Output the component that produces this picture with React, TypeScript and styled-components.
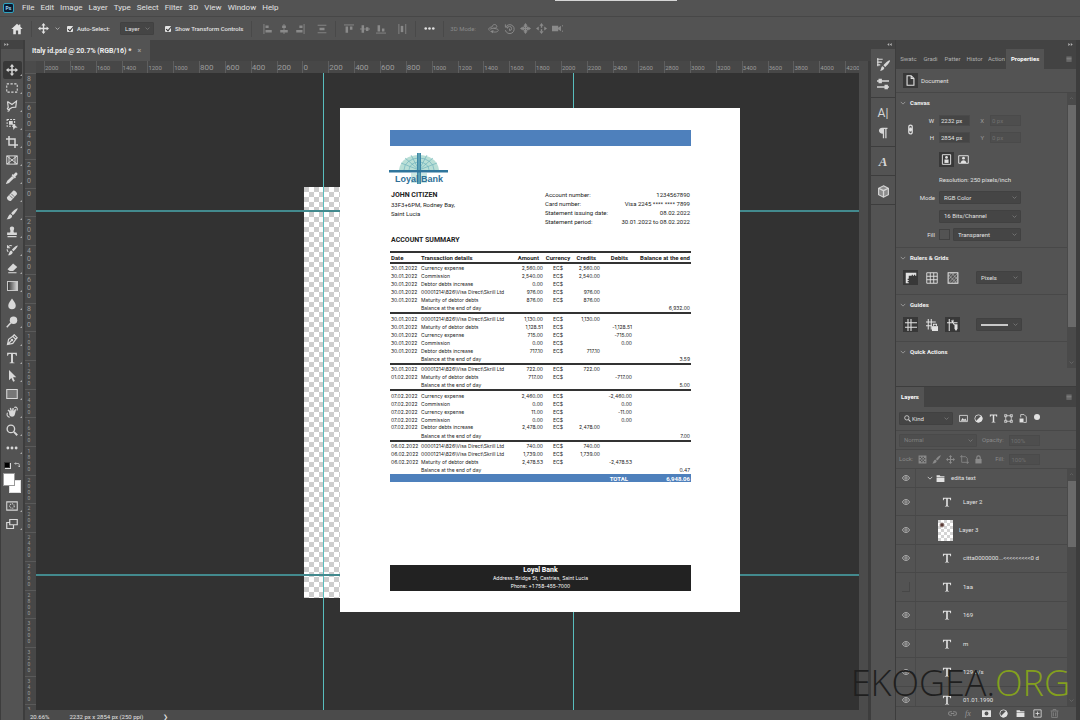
import React from "react";
import styled, { createGlobalStyle } from "styled-components";

const c = {
  panel: "#535353",
  strip: "#434343",
  edge: "#3d3d3d",
  field: "#454545",
  active: "#383838",
  canvas: "#323232",
  text: "#e2e2e2",
  dim: "#8a8a8a",
  blue: "#4e80bc",
  ink: "#222222",
};

const Global = createGlobalStyle`
  * { box-sizing: border-box; }
  html, body, #root { height: 100%; }
  body {
    margin: 0;
    background: ${c.panel};
    color: ${c.text};
    font: 6px/8px Roboto, "Liberation Sans", sans-serif;
    overflow: hidden;
  }
  button, input, select { font: inherit; color: inherit; }
  button { padding: 0; border: 0; background: none; display: grid; place-items: center; }
`;

/* ---------- shell ---------- */

const Shell = styled.div`
  position: relative;
  height: 100vh;
  display: flex;
  flex-direction: column;
`;
const MenuBar = styled.nav`
  position: relative;
  height: 17px;
  flex: none;
  display: flex;
  align-items: center;
  gap: 6px;
  padding-left: 3px;
  font-size: 8px;
  border-bottom: 1px solid #474747;
`;
const Brand = styled.span`
  width: 11px;
  height: 10px;
  margin-right: 2px;
  display: grid;
  place-items: center;
  border: 1px solid #2fa3c0;
  border-radius: 2px;
  background: #0a1c33;
  color: #9fd8f5;
  font: bold 5px/6px Roboto, sans-serif;
`;
const MenuItem = styled.button`
  line-height: 10px;
`;
const WindowEdge = styled.i`
  position: absolute;
  top: 0;
  left: 51.4%;
  width: 122px;
  height: 1px;
  background: #d6d6d6;
`;
const OptionsBar = styled.div`
  height: 23px;
  flex: none;
  display: flex;
  align-items: center;
  padding-left: 11px;
`;
const Cluster = styled.div<{ $gap?: number; $left?: number; $dim?: boolean }>`
  display: flex;
  align-items: center;
  gap: ${(p) => p.$gap ?? 5}px;
  margin-left: ${(p) => p.$left ?? 0}px;
  color: ${(p) => (p.$dim ? c.dim : c.text)};
`;
const Separator = styled.i`
  width: 1px;
  height: 16px;
  margin-left: 8px;
  background: #494949;
`;
const CheckLabel = styled.label`
  display: flex;
  align-items: center;
  gap: 4px;
  font-weight: 500;
`;
const CheckBox = styled.input`
  appearance: none;
  width: 6px;
  height: 6px;
  margin: 0;
  border-radius: 1px;
  background: #e4e4e4;
  position: relative;
  &::after {
    content: "";
    position: absolute;
    left: 2px;
    top: 0;
    width: 2px;
    height: 4px;
    border: solid #333;
    border-width: 0 1px 1px 0;
    transform: rotate(40deg);
  }
`;
const Body = styled.div`
  flex: 1;
  min-height: 0;
  display: flex;
`;

/* ---------- icons ---------- */

const Svg = styled.svg<{ $size: number }>`
  display: block;
  flex: none;
  width: ${(p) => p.$size}px;
  height: ${(p) => p.$size}px;
  fill: none;
  stroke: currentColor;
  stroke-width: 1.4;
  .f { fill: currentColor; stroke: none; }
`;
const art: Record<string, React.ReactNode> = {
  home: <path className="f" d="M8 1 0.500 8H3v7h3.500v-5h3v5H13V8h2.500L12.500 5V2h-2v1.200z" />,
  move: <path className="f" d="M8 0 5 3.500h2v3.500H3.500V5L0 8l3.500 3V9H7v3.500H5L8 16l3-3.500H9V9h3.500v2L16 8l-3.500-3v2H9V3.500h2z" />,
  marquee: <path strokeDasharray="3 2" d="M1 2.500h14v11H1z" />,
  lasso: <path strokeWidth="1.600" d="M2 2l6 4 6-4.500-1 8-5 .5-4 2.500M2 2l1 8c-2 1-1 3 .5 2.500S5 15 2 15" />,
  object: (<><path strokeDasharray="2.500 1.500" d="M1.500 2h10v9h-10z" /><path className="f" d="M4 4h5v5H4zM8.500 7l7 5.500-3.500.5-2 3z" /></>),
  crop: <path strokeWidth="2" d="M4 0v12h12M0 4h12v12" />,
  frame: <path d="M1 2.500h14v11H1zM1 2.500l14 11M15 2.500l-14 11M4 2.500v11M12 2.500v11" strokeWidth="1.300" />,
  dropper: (<><path className="f" d="M10 3.500 12 1.300c2-1.600 4.300.7 2.700 2.700L12.500 6l.8 1-1.500 1.500L7.500 4.200 9 2.700z" /><path strokeWidth="2" d="M9 6 2.500 12.300 1.500 14.500l2-.8L10.200 7.200" /></>),
  heal: (<><path className="f" d="M9.500 1c1.800-1.300 6 2.800 5.200 4.800L6.500 14.500c-1.900 1.400-6-2.300-5.200-4.800z" /><path stroke={c.panel} strokeWidth="1" d="M5 7.200l4 4M7 5l4 4" /></>),
  brush: <path className="f" d="M15.500.5c.8.8-4.500 8.500-6.300 9L7 7.400C7.600 5.500 14.500-.3 15.500.5zM6 8.200l2.200 2.200c.3 3-3.500 5.300-7.700 4.600C3 14 2.500 9 6 8.200z" />,
  stamp: <path className="f" d="M8 .8c2.200 0 3.400 1.800 2.700 3.600-.8 2-.7 3.100-.2 4.100h4V12h-13V8.500h4c.5-1 .6-2.100-.2-4.100C4.600 2.600 5.800.8 8 .8zM2 13.200h12V15H2z" />,
  history: (<><path className="f" d="M15.500 2c.8.8-4 7-5.800 7.500L8 7.800C8.600 6 14.500 1.200 15.500 2zM7 8.700l2 2C9 13 6 15.500 2.500 15 4.500 14 4 9.500 7 8.700z" /><path d="M2 1.500V5h3.500M2 5c1.500-3 4-3.500 6-2.500M1.500 7c0 1.500.3 2.500 1.500 3.500" /></>),
  eraser: (<><path className="f" d="M9.500 2 15 6.500 9.500 12H5L2 9.500z" /><path d="M3 14.300h11" /></>),
  drop: <path className="f" d="M8 .5c2 3.500 5 6 5 9.500a5 5 0 0 1-10 0C3 6.500 6 4 8 .5z" />,
  dodge: (<><circle className="f" cx="10" cy="5.500" r="5" /><path strokeWidth="2" d="M6.500 9 1 15" /></>),
  pen: (<><path strokeWidth="1.600" d="M2 14 3.500 7 9 3l4 4-4 5.500zM9 3l2-2 4 4-2 2M2 14l5-5" /><circle className="f" cx="8" cy="8" r="1.700" /></>),
  type: <path className="f" d="M1.500 1h13v4h-1.200c-.3-1.700-1-2.200-2.300-2.200H9.300V13c0 .9.500 1.200 2 1.200V15H4.700v-.8c1.500 0 2-.3 2-1.200V2.800H5C3.700 2.800 3 3.300 2.700 5H1.500z" />,
  arrow: <path className="f" d="M4 0v13.500l3.200-3 2.300 5.300 2.300-1-2.400-5.200h4.300z" />,
  rect: <path fill="#777" d="M1 2h14v12H1z" />,
  hand: (<><path className="f" d="M4 8 2 5.500l1.500-1L6 7 5 2.500l1.700-.3L8 6.500l.6-4 1.700.2L10.200 7l1.800-3 1.500.7-1.700 6.500C11 14.500 6.500 15.500 4.500 12z" /><path d="M11 2c3-1.500 5 1 3.500 4M2 9c-1.500 3 0 6 3 6" /></>),
  zoom: (<><circle cx="6.500" cy="6.500" r="5" strokeWidth="1.800" /><path strokeWidth="2.500" d="M10.500 10.500 15 15" /></>),
  dots: (<><circle className="f" cx="2.500" cy="8" r="1.900" /><circle className="f" cx="8" cy="8" r="1.900" /><circle className="f" cx="13.500" cy="8" r="1.900" /></>),
  mask: (<><path d="M1 2.500h14v11H1z" /><circle cx="8" cy="8" r="3" strokeDasharray="1.500 1" /></>),
  screen: <path strokeWidth="1.600" d="M5 2h10v7H5zM5 6H1v8h9V9" />,
  alignL: (<><path d="M1.500 0v16" /><path className="f" d="M4 2.500h5v4H4zM4 9.500h10v4H4z" /></>),
  alignC: (<><path d="M8 0v16" /><path className="f" d="M5 2.500h6v4H5zM2 9.500h12v4H2z" /></>),
  alignR: (<><path d="M14.500 0v16" /><path className="f" d="M7 2.500h5v4H7zM2 9.500h10v4H2z" /></>),
  spread: (<><path d="M1 2h14M1 14h14" /><path className="f" d="M4 6h8v4H4z" /></>),
  alignT: (<><path d="M0 1.500h16" /><path className="f" d="M2.500 4h4v10h-4zM9.500 4h4v5h-4z" /></>),
  alignM: (<><path d="M0 8h16" /><path className="f" d="M2.500 2h4v12h-4zM9.500 5h4v6h-4z" /></>),
  alignB: (<><path d="M0 14.500h16" /><path className="f" d="M2.500 2h4v10h-4zM9.500 7h4v5h-4z" /></>),
  spreadH: (<><path d="M3 0v16M14 0v16" /><path className="f" d="M6 3h4v10H6z" /></>),
  orbit: (<><path d="M2 11C-.5 8 3 5.500 6 6c0-4 5-5 6.500-2S10 8 8 7M3 9c3-2 12-1 12 1.500S10 14 6 12.500" /><path className="f" d="M8 10l-1 5-4-3z" /></>),
  roll: (<><path d="M2 2v4h4M2.500 6a6.500 6.500 0 1 1-.5 4.500" /><path d="M5 8a3 3 0 1 1 3 3V8" /></>),
  pan: (<><path className="f" d="M8 0 5 4h6zM8 16l3-4H5zM0 8l4 3V5zM16 8l-4-3v6z" /><path strokeWidth="2" d="M8 3v10M3 8h10" /><circle cx="8" cy="8" r="3.500" /></>),
  slide: (<><path className="f" d="M8 0 5 4h2v3h2V4h2zM8 16l3-4H5zM0 8l4 3V5zM16 8l-4-3v6z" /><path className="f" d="M7 9h2v3H7z" /></>),
  camera: <path className="f" d="M0 4h9v8H0zM9 7l4-3v8l-4-3zM15 3h1v2h-1zM15 11h1v2h-1z" />,
  brushes: (<><path className="f" d="M16 3c.8.800-4.300 7.500-6 8L8 9.200C8.600 7.500 15 2.200 16 3zM7 10l2 2c0 2.500-3 4-5.500 3.500 2-1 1-4.700 3.500-5.500z" /><path d="M0 1.500h7M0 5h6M0 8.500h4M1 0v10" /></>),
  sliders: (<><path strokeWidth="1.800" d="M0 4h16M0 12h16" /><path className="f" d="M2 1h4.500v6H2zM10 9h4.500v6H10z" /></>),
  para: <path className="f" d="M7 1h7v1.800h-1.300V15H11V2.800H9.500V15H7.800V9C1 9 1 1 7 1z" />,
  cube: (<><path fill="#8c8c8c" d="M8 1l6 3v8l-6 3-6-3V4z" /><path strokeWidth="1.600" d="M2 4l6 3 6-3M8 7v8" /></>),
  doc: <path strokeWidth="1.600" d="M3 1h6l4 4v10H3zM9 1v4h4" />,
  link: <path strokeWidth="1.800" d="M5.500 7V4a2.500 2.500 0 0 1 5 0v3zM5.500 9v3a2.500 2.500 0 0 0 5 0V9zM8 5v6" />,
  portrait: (<><path d="M2 1h12v14H2z" /><circle className="f" cx="8" cy="5" r="2" /><path className="f" d="M5 8h6v5H5z" /></>),
  landscape: (<><path d="M1 2.500h14v11H1z" /><circle className="f" cx="8" cy="6" r="2" /><path className="f" d="M4 13c0-5 8-5 8 0z" /></>),
  ruler: <path className="f" d="M1 1h14v4h-1.500V3.500H12V5h-1.500V3.500H9V5H5v4H3.500v1.500H5V12H3.500v1.500H5V15H1z" />,
  grid: <path strokeWidth="1.200" d="M1 1h14v14H1zM1 5.700h14M1 10.300h14M5.700 1v14M10.300 1v14" />,
  check: (<><path d="M1.500 1h13v14h-13z" /><path strokeWidth="1" d="M2 6l4-5M2 10 10 1M2 15 14 2M6 15l8-9M10 15l4-5M2 4l11 11M6 1l8 9" opacity=".6" /></>),
  guides: <path d="M4 0v16M8 0v16M0 5h16M0 11h16" />,
  guideLock: (<><path d="M3 0v14M7 0v14M0 4h13M0 9h8" /><path className="f" d="M8 9.500h8V16H8z" /><path d="M10 9V7h4v2" /></>),
  guideSmart: (<><path d="M3 0v16M0 5h14M6 2l4 6M8 1v3" /><path className="f" d="M10 7h4v6l-2 3-2-3z" /></>),
  image: (<><path d="M1 2.500h14v11H1z" /><path className="f" d="M3 12l3.500-5L9 10l2-2 3 4z" /></>),
  half: (<><circle cx="8" cy="8" r="6.500" /><path className="f" d="M12.800 3.200A6.800 6.800 0 1 1 3.200 12.800z" /></>),
  shape: <path d="M3 3h10v10H3zM1 1h4v4H1zM11 1h4v4h-4zM1 11h4v4H1zM11 11h4v4h-4z" strokeWidth="1.200" />,
  smart: (<><path d="M3 6V1h6l4 4v10H8" /><path className="f" d="M1 8h7v7H1z" /></>),
  checker: <path className="f" d="M1 1h14v14H1zM3 3v2.500h2.500V3zM8 3v2.500h2.500V3zM5.500 5.500V8H8V5.500zM10.500 5.500V8H13V5.500zM3 8v2.500h2.500V8zM8 8v2.500h2.500V8zM5.500 10.500V13H8v-2.500zM10.500 10.500V13H13v-2.500z" fillRule="evenodd" />,
  artboard: <path d="M3 0v13M0 3h10l3 3v10M3 13h13" />,
  lock: (<><path className="f" d="M2.500 7h11v8h-11z" /><path strokeWidth="2" d="M5 7V4.500a3 3 0 0 1 6 0V7" /></>),
  eye: (<><path strokeWidth="1.600" d="M1 8c2.500-6.500 11.500-6.500 14 0-2.500 6.500-11.500 6.500-14 0z" /><circle cx="8" cy="8" r="2.400" /></>),
  folder: (<><path className="f" d="M1 2h5.500L8 4h7v2H1zM1 7h14v7H1z" /></>),
  chain: <path strokeWidth="1.800" d="M7 11H4a3 3 0 0 1 0-6h3M9 5h3a3 3 0 0 1 0 6H9M5 8h6" />,
  maskAdd: (<><path className="f" fillRule="evenodd" d="M0 2h16v12H0zM8 4.500a3.500 3.500 0 1 0 0 7 3.500 3.500 0 0 0 0-7z" /></>),
  add: <path d="M1.500 1.500h13v13h-13zM8 4.500v7M4.500 8h7" />,
  trash: <path d="M1 3.500h14M5.500 3V1h5v2M3 4v11h10V4M6 6v7M10 6v7" />,
  chevron: <path d="M2 5l6 6 6-6" strokeWidth="2" />,
  up: <path d="M3 10l5-5 5 5" strokeWidth="1.600" />,
  burger: <path d="M1 3h14M1 6.500h14M1 10h14M1 13.500h14" />,
  back: <path className="f" d="M7 3v10L1 8zM15 3v10L9 8z" />,
  fwd: <path className="f" d="M1 3v10l6-5zM9 3v10l6-5z" />,
  swap: <path d="M2 4h9a3 3 0 0 1 3 3v6M5 1 2 4l3 3M11 10l3 3 2-3" strokeWidth="1.800" />,
};
const Icon = ({ n, s = 11 }: { n: string; s?: number }) => (
  <Svg $size={s} viewBox="0 0 16 16" aria-hidden="true">{art[n]}</Svg>
);

/* ---------- form parts ---------- */

const SelectBox = styled.span<{ $w?: number; $dim?: boolean }>`
  position: relative;
  display: flex;
  align-items: center;
  width: ${(p) => (p.$w ? p.$w + "px" : "auto")};
  height: 13px;
  background: ${(p) => (p.$dim ? "#4e4e4e" : c.field)};
  border: 1px solid ${(p) => (p.$dim ? "#4a4a4a" : "#414141")};
  border-radius: 1px;
  color: ${(p) => (p.$dim ? "#808080" : c.text)};
  select {
    appearance: none;
    width: 100%;
    height: 100%;
    padding: 0 10px 0 4px;
    border: 0;
    background: none;
  }
  select:disabled { opacity: 1; }
  svg { position: absolute; right: 3px; color: #8e8e8e; pointer-events: none; }
`;
const Select = ({ label, value, w, dim }: { label: string; value: string; w?: number; dim?: boolean }) => (
  <SelectBox $w={w} $dim={dim}>
    <select aria-label={label} disabled={dim} defaultValue={value}><option>{value}</option></select>
    <Icon n="chevron" s={5} />
  </SelectBox>
);
const Field = styled.input<{ $w?: number }>`
  width: ${(p) => p.$w ?? 31}px;
  height: 11px;
  padding: 0 1px;
  border: 1px solid #4a4a4a;
  background: ${c.field};
  &:disabled { background: #4e4e4e; color: #707070; }
`;

/* ---------- tools ---------- */

const ToolColumn = styled.aside`
  width: 25px;
  flex: none;
  display: flex;
  flex-direction: column;
  align-items: center;
  border: solid ${c.edge};
  border-width: 0 2px 0 1px;
`;
const ColumnCap = styled.div<{ $end?: boolean }>`
  width: 100%;
  height: 9px;
  flex: none;
  display: flex;
  align-items: center;
  justify-content: ${(p) => (p.$end ? "flex-end" : "flex-start")};
  padding: 0 3px;
  background: ${c.strip};
  color: #b5b5b5;
`;
const ToolList = styled.div`
  padding-top: 12px;
`;
const ToolButton = styled.button<{ $on?: boolean }>`
  position: relative;
  width: 19px;
  height: 18px;
  border-radius: 2px;
  color: #d8d8d8;
  background: ${(p) => (p.$on ? c.active : "none")};
  &::after {
    content: "";
    position: absolute;
    right: 0;
    bottom: 3px;
    border: 1px solid transparent;
    border-right-color: #aaa;
    border-bottom-color: #aaa;
  }
`;
const GradientChip = styled.i`
  width: 11px;
  height: 10px;
  border: 1px solid #c8c8c8;
  background: linear-gradient(90deg, #3a3a3a, #d0d0d0);
`;
const MiniRow = styled.div`
  height: 16px;
  display: flex;
  align-items: center;
  justify-content: space-around;
`;
const MiniSwatch = styled.i`
  width: 6px;
  height: 6px;
  background: #000;
  border: 1px solid #333;
  box-shadow: 1px 1px 0 #ddd;
`;
const Colours = styled.div`
  position: relative;
  height: 24px;
`;
const Colour = styled.button<{ $back?: boolean }>`
  position: absolute;
  left: ${(p) => (p.$back ? 6 : 0)}px;
  top: ${(p) => (p.$back ? 7 : 0)}px;
  width: 12px;
  height: 13px;
  background: #fff;
  border: 1px solid ${(p) => (p.$back ? "#ddd" : "#999")};
`;

/* ---------- document ---------- */

const DocColumn = styled.main`
  flex: 1;
  min-width: 0;
  display: flex;
  flex-direction: column;
`;
const TabStrip = styled.div`
  height: 21px;
  flex: none;
  display: flex;
  background: ${c.strip};
`;
const DocTab = styled.div`
  width: 125px;
  display: flex;
  align-items: center;
  gap: 6px;
  padding-left: 7px;
  background: ${c.panel};
  color: #eee;
  font-size: 7px;
  font-weight: bold;
  white-space: nowrap;
  button { color: #999; }
`;
const DocGrid = styled.div`
  flex: 1;
  min-height: 0;
  display: grid;
  grid-template: 12px 1fr 10px / 11px 1fr 12px;
`;
const Corner = styled.div`
  background: #4b4b4b;
`;
const RulerTop = styled.div`
  overflow: hidden;
  padding-left: 8px;
  background: #474747;
  color: #9c9c9c;
`;
const TopTicks = styled.div`
  width: calc(100% + 12px);
  height: 100%;
  display: grid;
  grid-template-columns: repeat(32, 1fr);
`;
const TopTick = styled.span<{ $small: boolean }>`
  min-width: 0;
  border-left: 1px solid #5e5e5e;
  font-size: ${(p) => (p.$small ? 6 : 8)}px;
  line-height: 14px;
`;
const RulerSide = styled.div`
  overflow: hidden;
  background: #474747;
  color: #9c9c9c;
`;
const SideTicks = styled.div`
  height: calc(100% + 23px);
  display: grid;
  grid-template-rows: repeat(23, 1fr);
`;
const SideTick = styled.span<{ $small: boolean }>`
  min-height: 0;
  padding-top: 1px;
  border-top: 1px solid #5a5a5a;
  writing-mode: vertical-lr;
  text-orientation: upright;
  font-size: ${(p) => (p.$small ? 5 : 7)}px;
  line-height: 7px;
`;
const Scroller = styled.div`
  grid-row: 1 / 4;
  grid-column: 3;
  background: #4b4b4b;
  border-right: 3px solid ${c.edge};
`;
const Stage = styled.div`
  position: relative;
  overflow: hidden;
  background: ${c.canvas};
`;
const Artboard = styled.div`
  position: absolute;
  left: 268px;
  top: 114px;
  width: 321px;
  height: 411px;
  background: conic-gradient(#fff 25%, #cdcdcd 0 50%, #fff 0 75%, #cdcdcd 0) 0 0 / 10px 10px;
`;
const Guide = styled.i<{ $x?: number; $y?: number }>`
  position: absolute;
  left: ${(p) => p.$x ?? 0}px;
  top: ${(p) => p.$y ?? 0}px;
  width: ${(p) => (p.$x ? "1px" : "100%")};
  height: ${(p) => (p.$y ? "2px" : "100%")};
  background: ${(p) => (p.$y ? "#438a8e" : "#58bdbd")};
`;
const StatusBar = styled.footer`
  grid-column: 1 / 3;
  display: flex;
  align-items: center;
  gap: 20px;
  padding: 4px 0 0 5px;
  background: #4b4b4b;
`;

/* ---------- statement ---------- */

const Overlay = styled.div`
  position: absolute;
  inset: 0;
  display: grid;
  place-items: center;
  pointer-events: none;
`;
const Sheet = styled.article`
  width: 400px;
  height: 504px;
  padding: 22px 49px 21px 50px;
  display: flex;
  flex-direction: column;
  background: #fff;
  color: ${c.ink};
  line-height: 9px;
`;
const Band = styled.div`
  height: 16px;
  flex: none;
  background: ${c.blue};
`;
const Logo = styled.svg`
  display: block;
  flex: none;
  width: 60px;
  height: 33px;
  margin: 6px 0 5px -1px;
`;
const Parties = styled.div`
  display: flex;
  justify-content: space-between;
  padding: 0 1px;
`;
const Strong = styled.h2`
  margin: 0;
  font-size: 7px;
  line-height: 10px;
`;
const Lines = styled.p`
  margin: 0;
  white-space: pre-line;
`;
const Facts = styled.dl`
  width: 145px;
  margin: 0;
  display: grid;
  grid-template-columns: auto auto;
  dt, dd { margin: 0; white-space: nowrap; }
  dd { text-align: right; }
`;
const Summary = styled(Strong)`
  margin: 9px 0 6px 1px;
`;
const Ledger = styled.table`
  width: 100%;
  height: 231px;
  flex: none;
  table-layout: fixed;
  border-collapse: collapse;
  font: 5px/6px Inter, Roboto, sans-serif;
  thead { border-top: 2px solid #333; }
  tbody { border-top: 2px solid #333; }
  thead tr { height: 11px; }
  tfoot tr { height: 8px; }
  th, td { padding: 0; white-space: nowrap; text-align: right; }
  th { font: bold 6px/8px Roboto, sans-serif; }
  .l { text-align: left; }
  .m { text-align: center; }
  td:first-child, th:first-child { padding-left: 1px; }
  td:last-child, th:last-child { padding-right: 1px; }
  .in { padding-right: 4px; }
  tfoot td { background: ${c.blue}; color: #fff; font: bold 6px/7px Roboto, sans-serif; }
`;
const Imprint = styled.footer`
  margin-top: auto;
  padding: 1px 0;
  background: #222;
  color: #fff;
  text-align: center;
  font: 5px/8px Inter, Roboto, sans-serif;
  strong { display: block; font: bold 7px/8px Roboto, sans-serif; }
`;

type Row = [string, string, string?, string?, string?, string?];
const visa = "00001214\\826\\Visa Direct\\Skrill Ltd";
const end = "Balance at the end of day";
const groups: Row[][] = [
  [
    ["30.01.2022", "Currency expense", "2,560.00", "2,560.00"],
    ["30.01.2022", "Commission", "2,540.00", "2,540.00"],
    ["30.01.2022", "Debtor debts increase", "0.00"],
    ["30.01.2022", visa, "976.00", "976.00"],
    ["30.01.2022", "Maturity of debtor debts", "876.00", "876.00"],
    ["", end, "", "", "", "6,932.00"],
  ],
  [
    ["30.01.2022", visa, "1,130.00", "1,130.00"],
    ["30.01.2022", "Maturity of debtor debts", "1,128.51", "", "-1,128.51"],
    ["30.01.2022", "Currency expense", "715.00", "", "-715.00"],
    ["30.01.2022", "Commission", "0.00", "", "0.00"],
    ["30.01.2022", "Debtor debts increase", "717.10", "717.10"],
    ["", end, "", "", "", "3.59"],
  ],
  [
    ["30.01.2022", visa, "722.00", "722.00"],
    ["01.02.2022", "Maturity of debtor debts", "717.00", "", "-717.00"],
    ["", end, "", "", "", "5.00"],
  ],
  [
    ["07.02.2022", "Currency expense", "2,460.00", "", "-2,460.00"],
    ["07.02.2022", "Commission", "0.00", "", "0.00"],
    ["07.02.2022", "Currency expense", "11.00", "", "-11.00"],
    ["07.02.2022", "Commission", "0.00", "", "0.00"],
    ["07.02.2022", "Debtor debts increase", "2,478.00", "2,478.00"],
    ["", end, "", "", "", "7.00"],
  ],
  [
    ["06.02.2022", visa, "740.00", "740.00"],
    ["06.02.2022", visa, "1,739.00", "1,739.00"],
    ["06.02.2022", "Maturity of debtor debts", "2,478.53", "", "-2,478.53"],
    ["", end, "", "", "", "0.47"],
  ],
];
const facts = [
  ["Account number:", "1234567890"],
  ["Card number:", "Visa 2245 **** **** 7899"],
  ["Statement issuing date:", "08.02.2022"],
  ["Statement period:", "30.01.2022 to 08.02.2022"],
];

const BankLogo = () => (
  <Logo viewBox="0 0 60 33" role="img" aria-label="Loyal Bank">
    <path d="M10 18C11 8 20 3 30 3s19 5 20 15z" fill="#b9dfd6" />
    <g stroke="#5fa9b8" strokeWidth=".7" fill="none" opacity=".8">
      <path d="M30 18 12 11M30 18 16 6M30 18 22 3M30 18 38 3M30 18 44 6M30 18 48 11M15 18a15 12 0 0 1 30 0M20 18a10 8 0 0 1 20 0" />
    </g>
    <path d="M22 21h16v10H22z" fill="#a8d8d0" opacity=".6" />
    <path d="M28 1h4v31h-4z" fill="#3f88a6" />
    <path d="M29.500 1h1v31h-1z" fill="#79b8c4" />
    <path d="M0 18h59v2.500H0z" fill="#2f759c" />
    <text x="6" y="30" fontFamily="Liberation Sans, sans-serif" fontWeight="bold" fontSize="9" fill="#2f6f98">Loyal Bank</text>
  </Logo>
);

const Statement = () => (
  <Sheet>
    <Band />
    <BankLogo />
    <Parties>
      <div>
        <Strong>JOHN CITIZEN</Strong>
        <Lines>{"33F3+6PM, Rodney Bay,\nSaint Lucia"}</Lines>
      </div>
      <Facts>
        {facts.map(([k, v]) => (
          <React.Fragment key={k}><dt>{k}</dt><dd>{v}</dd></React.Fragment>
        ))}
      </Facts>
    </Parties>
    <Summary>ACCOUNT SUMMARY</Summary>
    <Ledger>
      <colgroup>
        {[31, 90, 32, 30, 27, 32, 59].map((w, i) => <col key={i} width={w} />)}
      </colgroup>
      <thead>
        <tr>
          <th className="l">Date</th>
          <th className="l">Transaction details</th>
          <th className="in">Amount</th>
          <th className="m">Currency</th>
          <th className="in">Credits</th>
          <th className="in">Debits</th>
          <th>Balance at the end</th>
        </tr>
      </thead>
      {groups.map((rows, g) => (
        <tbody key={g}>
          {rows.map(([date, what, amount, credit, debit, balance], i) => (
            <tr key={i}>
              <td className="l">{date}</td>
              <td className="l">{what}</td>
              <td>{amount}</td>
              <td className="m">{amount ? "EC$" : ""}</td>
              <td>{credit}</td>
              <td>{debit}</td>
              <td>{balance}</td>
            </tr>
          ))}
        </tbody>
      ))}
      <tfoot>
        <tr><td colSpan={5} /><td className="in">TOTAL</td><td>6,948.06</td></tr>
      </tfoot>
    </Ledger>
    <Imprint>
      <strong>Loyal Bank</strong>
      <div>Address: Bridge St, Castries, Saint Lucia</div>
      <div>Phone: +1 758-455-7000</div>
    </Imprint>
  </Sheet>
);

/* ---------- panels ---------- */

const IconDock = styled.aside`
  width: 24px;
  flex: none;
  display: flex;
  flex-direction: column;
  color: #d6d6d6;
`;
const DockGroup = styled.div`
  display: grid;
  justify-items: center;
  border-bottom: 1px solid ${c.edge};
  padding: 5px 0 3px;
  button { height: 20px; }
`;
const Letter = styled.span<{ $serif?: boolean }>`
  font: ${(p) => (p.$serif ? 'italic bold 13px/14px "Liberation Serif", serif' : '12px/14px Roboto, sans-serif')};
`;
const Panels = styled.aside`
  width: 185px;
  flex: none;
  display: flex;
  flex-direction: column;
  border: solid ${c.edge};
  border-width: 0 4px 0 1px;
`;
const PanelTabs = styled.div`
  height: 20px;
  flex: none;
  display: flex;
  align-items: stretch;
  background: ${c.strip};
  > svg { margin: 7px 4px 0 auto; color: #b5b5b5; }
`;
const PanelTab = styled.button<{ $on?: boolean }>`
  width: ${(p) => (p.$on ? "auto" : "22px")};
  padding: 0 5px;
  display: block;
  overflow: hidden;
  text-align: left;
  white-space: nowrap;
  background: ${(p) => (p.$on ? c.panel : "none")};
  color: ${(p) => (p.$on ? "#fff" : "#b0b0b0")};
  font-weight: ${(p) => (p.$on ? "bold" : "normal")};
`;
const TabClip = styled.span`
  display: block;
  overflow: hidden;
  margin-right: -3px;
`;
const Properties = styled.section`
  height: 318px;
  flex: none;
  border-bottom: 1px solid ${c.edge};
`;
const TitleRow = styled.div`
  height: 24px;
  display: flex;
  align-items: center;
  gap: 3px;
  padding-left: 7px;
  border-bottom: 1px solid #474747;
`;
const Scrolled = styled.div`
  display: flex;
`;
const Scroll = styled.div`
  flex: 1;
  min-width: 0;
`;
const Track = styled.div<{ $h?: number }>`
  width: 9px;
  height: ${(p) => (p.$h ? p.$h + "px" : "auto")};
  flex: none;
  display: flex;
  flex-direction: column;
  align-items: center;
  padding: 3px 0;
  background: #4a4a4a;
  color: #777;
`;
const Thumb = styled.i<{ $h: number }>`
  width: 8px;
  height: ${(p) => p.$h}px;
  margin: 4px 0 auto;
  background: #6a6a6a;
`;
const Section = styled.section<{ $h?: number }>`
  height: ${(p) => (p.$h ? p.$h + "px" : "auto")};
  padding-left: 4px;
  border-bottom: ${(p) => (p.$h ? "1px solid #484848" : "0")};
`;
const SectionHead = styled.h3`
  height: 19px;
  margin: 0;
  display: flex;
  align-items: center;
  gap: 4px;
  font-size: 6px;
  color: #f2f2f2;
  svg { color: #aaa; }
`;
const SizeGrid = styled.div`
  display: grid;
  grid-template-columns: 27px 12px 31px 20px 31px;
  grid-auto-rows: 17px;
  align-items: center;
  label { text-align: right; padding-right: 5px; }
  label.off { color: #999; padding-right: 6px; }
`;
const LinkCell = styled.span`
  grid-row: 1 / 3;
  display: grid;
  place-items: center;
  height: 100%;
  padding-right: 7px;
`;
const Indent = styled.div<{ $h: number }>`
  height: ${(p) => p.$h}px;
  display: flex;
  align-items: center;
  gap: 2px;
  padding-left: 39px;
`;
const RowLabel = styled.span`
  width: 19px;
  margin-left: -23px;
  margin-right: 2px;
  text-align: right;
`;
const Toggle = styled.button<{ $on?: boolean }>`
  width: 15px;
  height: 15px;
  background: ${(p) => (p.$on ? c.active : "none")};
`;
const Chip = styled.i`
  width: 11px;
  height: 11px;
  margin-right: 1px;
  border: 1px solid #414141;
`;
const ToggleRow = styled.div`
  display: flex;
  align-items: center;
  gap: 6px;
  padding: 3px 0 0 3px;
  > span { margin-left: 10px; }
`;
const LineSelect = styled(SelectBox)`
  &::before { content: ""; width: 27px; height: 2px; margin-left: 4px; background: #c8c8c8; }
  select { position: absolute; inset: 0; color: transparent; }
`;
const Layers = styled.section`
  flex: 1;
  min-height: 0;
  display: flex;
  flex-direction: column;
`;
const FilterRow = styled.div<{ $h: number; $gap?: number; $dim?: boolean }>`
  height: ${(p) => p.$h}px;
  flex: none;
  display: flex;
  align-items: center;
  gap: ${(p) => p.$gap ?? 5}px;
  padding-left: 3px;
  border-bottom: 1px solid #484848;
  color: ${(p) => (p.$dim ? "#8a8a8a" : c.text)};
`;
const KindBox = styled(SelectBox)`
  > svg:first-child { position: static; margin-left: 4px; color: #ddd; }
  select { padding-left: 1px; }
`;
const Dot = styled.i`
  width: 6px;
  height: 6px;
  margin: 0 0 4px;
  border-radius: 50%;
  background: #e0e0e0;
`;
const ListArea = styled.div`
  flex: 1;
  min-height: 0;
  display: flex;
  overflow: hidden;
`;
const LayerList = styled.ul`
  flex: 1;
  height: calc(100% + 9px);
  margin: 0;
  padding: 0;
  list-style: none;
  display: grid;
  grid-template-rows: 19px repeat(8, 1fr);
`;
const LayerRow = styled.li`
  display: flex;
  align-items: stretch;
  border-bottom: 1px solid #484848;
`;
const EyeCell = styled.button`
  width: 20px;
  border-right: 1px solid #4a4a4a;
  color: #c4c4c4;
`;
const EmptyEye = styled.i`
  width: 8px;
  height: 10px;
  border: solid #474747;
  border-width: 0 1px 1px 0;
`;
const LayerBody = styled.div<{ $left: number; $gap: number }>`
  display: flex;
  align-items: center;
  gap: ${(p) => p.$gap}px;
  padding-left: ${(p) => p.$left}px;
`;
const Thumbnail = styled.i`
  width: 15px;
  height: 21px;
  background:
    radial-gradient(circle at 4px 5px, #5a3a34 1px, transparent 3px),
    conic-gradient(#fff 25%, #d4d4d4 0 50%, #fff 0 75%, #d4d4d4 0) 0 0 / 6px 6px;
`;
const LayerActions = styled.div`
  height: 14px;
  flex: none;
  display: flex;
  align-items: center;
  gap: 8px;
  padding-left: 52px;
  border-top: 1px solid #484848;
`;
const Fx = styled.span`
  width: 9px;
  font: italic 8px/9px "Liberation Serif", serif;
  color: #999;
`;
const Watermark = styled.div`
  position: absolute;
  right: 10px;
  bottom: 15px;
  font: 300 36px/44px "Open Sans", sans-serif;
  color: #1f1f1f;
  span { color: #84a01d; }
`;

const tools = ["move", "marquee", "lasso", "object", "crop", "frame", "dropper", "heal", "brush", "stamp", "history", "eraser", "gradient", "drop", "dodge", "pen", "type", "arrow", "rect", "hand", "zoom", "dots"];
const layers = ["Layer 2", "Layer 3", "citta0000000...<<<<<<<<<0 d", "1aa", "169", "m", "129 b/s", "01.01.1990"];
const menus = ["File", "Edit", "Image", "Layer", "Type", "Select", "Filter", "3D", "View", "Window", "Help"];
const xMarks = Array.from({ length: 32 }, (_, i) => Math.abs(i - 10) * 200);
const yMarks = Array.from({ length: 23 }, (_, i) => Math.abs(i - 4) * 200);

export default function App() {
  return (
    <>
      <Global />
      <Shell>
        <MenuBar>
          <Brand>Ps</Brand>
          {menus.map((m) => <MenuItem key={m}>{m}</MenuItem>)}
          <WindowEdge />
        </MenuBar>
        <OptionsBar>
          <Icon n="home" s={12} />
          <Separator />
          <Cluster $left={6} $gap={6}><Icon n="move" /><Icon n="chevron" s={5} /></Cluster>
          <Cluster $left={7} $gap={10}>
            <CheckLabel><CheckBox type="checkbox" defaultChecked />Auto-Select:</CheckLabel>
            <Select label="Auto-select target" value="Layer" w={34} />
          </Cluster>
          <Cluster $left={11}>
            <CheckLabel><CheckBox type="checkbox" defaultChecked />Show Transform Controls</CheckLabel>
          </Cluster>
          <Separator />
          <Cluster $left={11} $gap={6} $dim><Icon n="alignL" s={10} /><Icon n="alignC" s={10} /><Icon n="alignR" s={10} /></Cluster>
          <Cluster $left={12} $dim><Icon n="spread" s={10} /></Cluster>
          <Separator />
          <Cluster $left={8} $gap={6} $dim><Icon n="alignT" s={10} /><Icon n="alignM" s={10} /><Icon n="alignB" s={10} /></Cluster>
          <Cluster $left={11} $dim><Icon n="spreadH" s={10} /></Cluster>
          <Separator />
          <Cluster $left={8}><Icon n="dots" /></Cluster>
          <Separator />
          <Cluster $left={6} $gap={12} $dim>
            <span>3D Mode:</span>
            <Cluster $gap={5} $dim><Icon n="orbit" /><Icon n="roll" /><Icon n="pan" /><Icon n="slide" /><Icon n="camera" /></Cluster>
          </Cluster>
        </OptionsBar>

        <Body>
          <ToolColumn>
            <ColumnCap><Icon n="fwd" s={5} /></ColumnCap>
            <ToolList>
              {tools.map((t, i) => (
                <ToolButton key={t} $on={i === 0} aria-label={t}>
                  {t === "gradient" ? <GradientChip /> : <Icon n={t} s={12} />}
                </ToolButton>
              ))}
              <MiniRow><MiniSwatch /><Icon n="swap" s={6} /></MiniRow>
              <Colours>
                <Colour $back aria-label="Background colour" />
                <Colour aria-label="Foreground colour" />
              </Colours>
              <ToolButton aria-label="Quick mask"><Icon n="mask" s={12} /></ToolButton>
              <ToolButton aria-label="Screen mode"><Icon n="screen" s={12} /></ToolButton>
            </ToolList>
          </ToolColumn>

          <DocColumn>
            <TabStrip>
              <DocTab>Italy id.psd @ 20.7% (RGB/16) *<button aria-label="Close">×</button></DocTab>
            </TabStrip>
            <DocGrid>
              <Corner />
              <RulerTop>
                <TopTicks>
                  {xMarks.map((v, i) => <TopTick key={i} $small={v > 999}>{v}</TopTick>)}
                </TopTicks>
              </RulerTop>
              <Scroller />
              <RulerSide>
                <SideTicks>
                  {yMarks.map((v, i) => <SideTick key={i} $small={v > 999}>{v}</SideTick>)}
                </SideTicks>
              </RulerSide>
              <Stage>
                <Artboard />
                <Guide $x={287} />
                <Guide $x={537} />
                <Guide $y={137} />
                <Guide $y={501} />
              </Stage>
              <StatusBar>
                <span>20.66%</span>
                <span>2232 px x 2854 px (250 ppi)</span>
                <span>❯</span>
              </StatusBar>
            </DocGrid>
          </DocColumn>

          <IconDock>
            <ColumnCap $end><Icon n="back" s={5} /></ColumnCap>
            <DockGroup>
              <button aria-label="Brush settings"><Icon n="brushes" s={13} /></button>
              <button aria-label="Brushes"><Icon n="sliders" s={12} /></button>
            </DockGroup>
            <DockGroup>
              <button aria-label="Character"><Letter>A|</Letter></button>
              <button aria-label="Paragraph"><Icon n="para" s={12} /></button>
            </DockGroup>
            <DockGroup><button aria-label="Glyphs"><Letter $serif>A</Letter></button></DockGroup>
            <DockGroup><button aria-label="3D"><Icon n="cube" s={13} /></button></DockGroup>
          </IconDock>

          <Panels>
            <ColumnCap $end><Icon n="fwd" s={5} /></ColumnCap>
            <PanelTabs>
              {["Swatc", "Gradi", "Patter", "Histor", "Action"].map((t) => (
                <PanelTab key={t}><TabClip>{t}</TabClip></PanelTab>
              ))}
              <PanelTab $on>Properties</PanelTab>
              <Icon n="burger" s={6} />
            </PanelTabs>
            <Properties>
              <TitleRow><Toggle $on aria-label="Document"><Icon n="doc" /></Toggle>Document</TitleRow>
              <Scrolled>
                <Scroll>
                  <Section $h={155}>
                    <SectionHead><Icon n="chevron" s={6} />Canvas</SectionHead>
                    <SizeGrid>
                      <LinkCell><Icon n="link" s={11} /></LinkCell>
                      <label htmlFor="w">W</label><Field id="w" defaultValue="2232 px" />
                      <label className="off" htmlFor="x">X</label><Field id="x" disabled defaultValue="0 px" />
                      <label htmlFor="h">H</label><Field id="h" defaultValue="2854 px" />
                      <label className="off" htmlFor="y">Y</label><Field id="y" disabled defaultValue="0 px" />
                    </SizeGrid>
                    <Indent $h={27}>
                      <Toggle $on aria-label="Portrait"><Icon n="portrait" /></Toggle>
                      <Toggle aria-label="Landscape"><Icon n="landscape" /></Toggle>
                    </Indent>
                    <Indent $h={14}>Resolution: 250 pixels/inch</Indent>
                    <Indent $h={21}><RowLabel>Mode</RowLabel><Select label="Mode" value="RGB Color" w={82} /></Indent>
                    <Indent $h={16}><Select label="Depth" value="16 Bits/Channel" w={82} /></Indent>
                    <Indent $h={21}><RowLabel>Fill</RowLabel><Chip /><Select label="Fill" value="Transparent" w={68} /></Indent>
                  </Section>
                  <Section $h={47}>
                    <SectionHead><Icon n="chevron" s={6} />Rulers &amp; Grids</SectionHead>
                    <ToggleRow>
                      <Toggle $on aria-label="Rulers"><Icon n="ruler" s={12} /></Toggle>
                      <Toggle aria-label="Grid"><Icon n="grid" s={12} /></Toggle>
                      <Toggle aria-label="Pixel grid"><Icon n="check" s={12} /></Toggle>
                      <Select label="Units" value="Pixels" w={46} />
                    </ToggleRow>
                  </Section>
                  <Section $h={47}>
                    <SectionHead><Icon n="chevron" s={6} />Guides</SectionHead>
                    <ToggleRow>
                      <Toggle $on aria-label="Show guides"><Icon n="guides" s={12} /></Toggle>
                      <Toggle aria-label="Lock guides"><Icon n="guideLock" s={12} /></Toggle>
                      <Toggle $on aria-label="Smart guides"><Icon n="guideSmart" s={12} /></Toggle>
                      <LineSelect $w={46}>
                        <select aria-label="Guide style"><option /></select>
                        <Icon n="chevron" s={5} />
                      </LineSelect>
                    </ToggleRow>
                  </Section>
                  <Section>
                    <SectionHead><Icon n="chevron" s={6} />Quick Actions</SectionHead>
                  </Section>
                </Scroll>
                <Track $h={275}><Icon n="up" s={5} /><Thumb $h={222} /><Icon n="chevron" s={5} /></Track>
              </Scrolled>
            </Properties>
            <Layers>
              <PanelTabs><PanelTab $on>Layers</PanelTab><Icon n="burger" s={6} /></PanelTabs>
              <FilterRow $h={24} $gap={6}>
                <KindBox $w={54}>
                  <Icon n="zoom" s={7} />
                  <select aria-label="Filter"><option>Kind</option></select>
                  <Icon n="chevron" s={5} />
                </KindBox>
                <Icon n="image" s={9} /><Icon n="half" s={9} /><Icon n="type" s={9} /><Icon n="shape" s={9} /><Icon n="smart" s={9} /><Dot />
              </FilterRow>
              <FilterRow $h={19} $dim>
                <Select label="Blend mode" value="Normal" w={78} dim />
                <label htmlFor="op">Opacity:</label>
                <Field id="op" $w={31} disabled defaultValue="100%" />
              </FilterRow>
              <FilterRow $h={19} $dim>
                Lock:
                <Icon n="checker" s={9} /><Icon n="brush" s={9} /><Icon n="move" s={9} /><Icon n="artboard" s={9} /><Icon n="lock" s={9} />
                <Cluster $left={7} $dim><label htmlFor="fl">Fill:</label><Field id="fl" $w={31} disabled defaultValue="100%" /></Cluster>
              </FilterRow>
              <ListArea>
                <LayerList>
                  <LayerRow>
                    <EyeCell aria-label="Visibility"><Icon n="eye" s={8} /></EyeCell>
                    <LayerBody $left={11} $gap={3}><Icon n="chevron" s={6} /><Icon n="folder" s={9} /><span>&nbsp;&nbsp;edita text</span></LayerBody>
                  </LayerRow>
                  {layers.map((name, i) => (
                    <LayerRow key={name}>
                      <EyeCell aria-label="Visibility">{i === 3 ? <EmptyEye /> : <Icon n="eye" s={8} />}</EyeCell>
                      <LayerBody $left={i === 1 ? 22 : 26} $gap={i === 1 ? 6 : 11}>
                        {i === 1 ? <Thumbnail /> : <Icon n="type" s={10} />}
                        <span>{name}</span>
                      </LayerBody>
                    </LayerRow>
                  ))}
                </LayerList>
                <Track><Icon n="up" s={5} /><Thumb $h={66} /><Icon n="chevron" s={5} /></Track>
              </ListArea>
              <LayerActions>
                <Cluster $dim><Icon n="chain" s={9} /></Cluster>
                <Fx>fx</Fx>
                <Icon n="maskAdd" s={9} /><Icon n="half" s={9} /><Icon n="folder" s={9} /><Icon n="add" s={9} />
                <Cluster $dim><Icon n="trash" s={9} /></Cluster>
              </LayerActions>
            </Layers>
          </Panels>
        </Body>

        <Overlay><Statement /></Overlay>
        <Watermark>EKOGEA.<span>ORG</span></Watermark>
      </Shell>
    </>
  );
}
